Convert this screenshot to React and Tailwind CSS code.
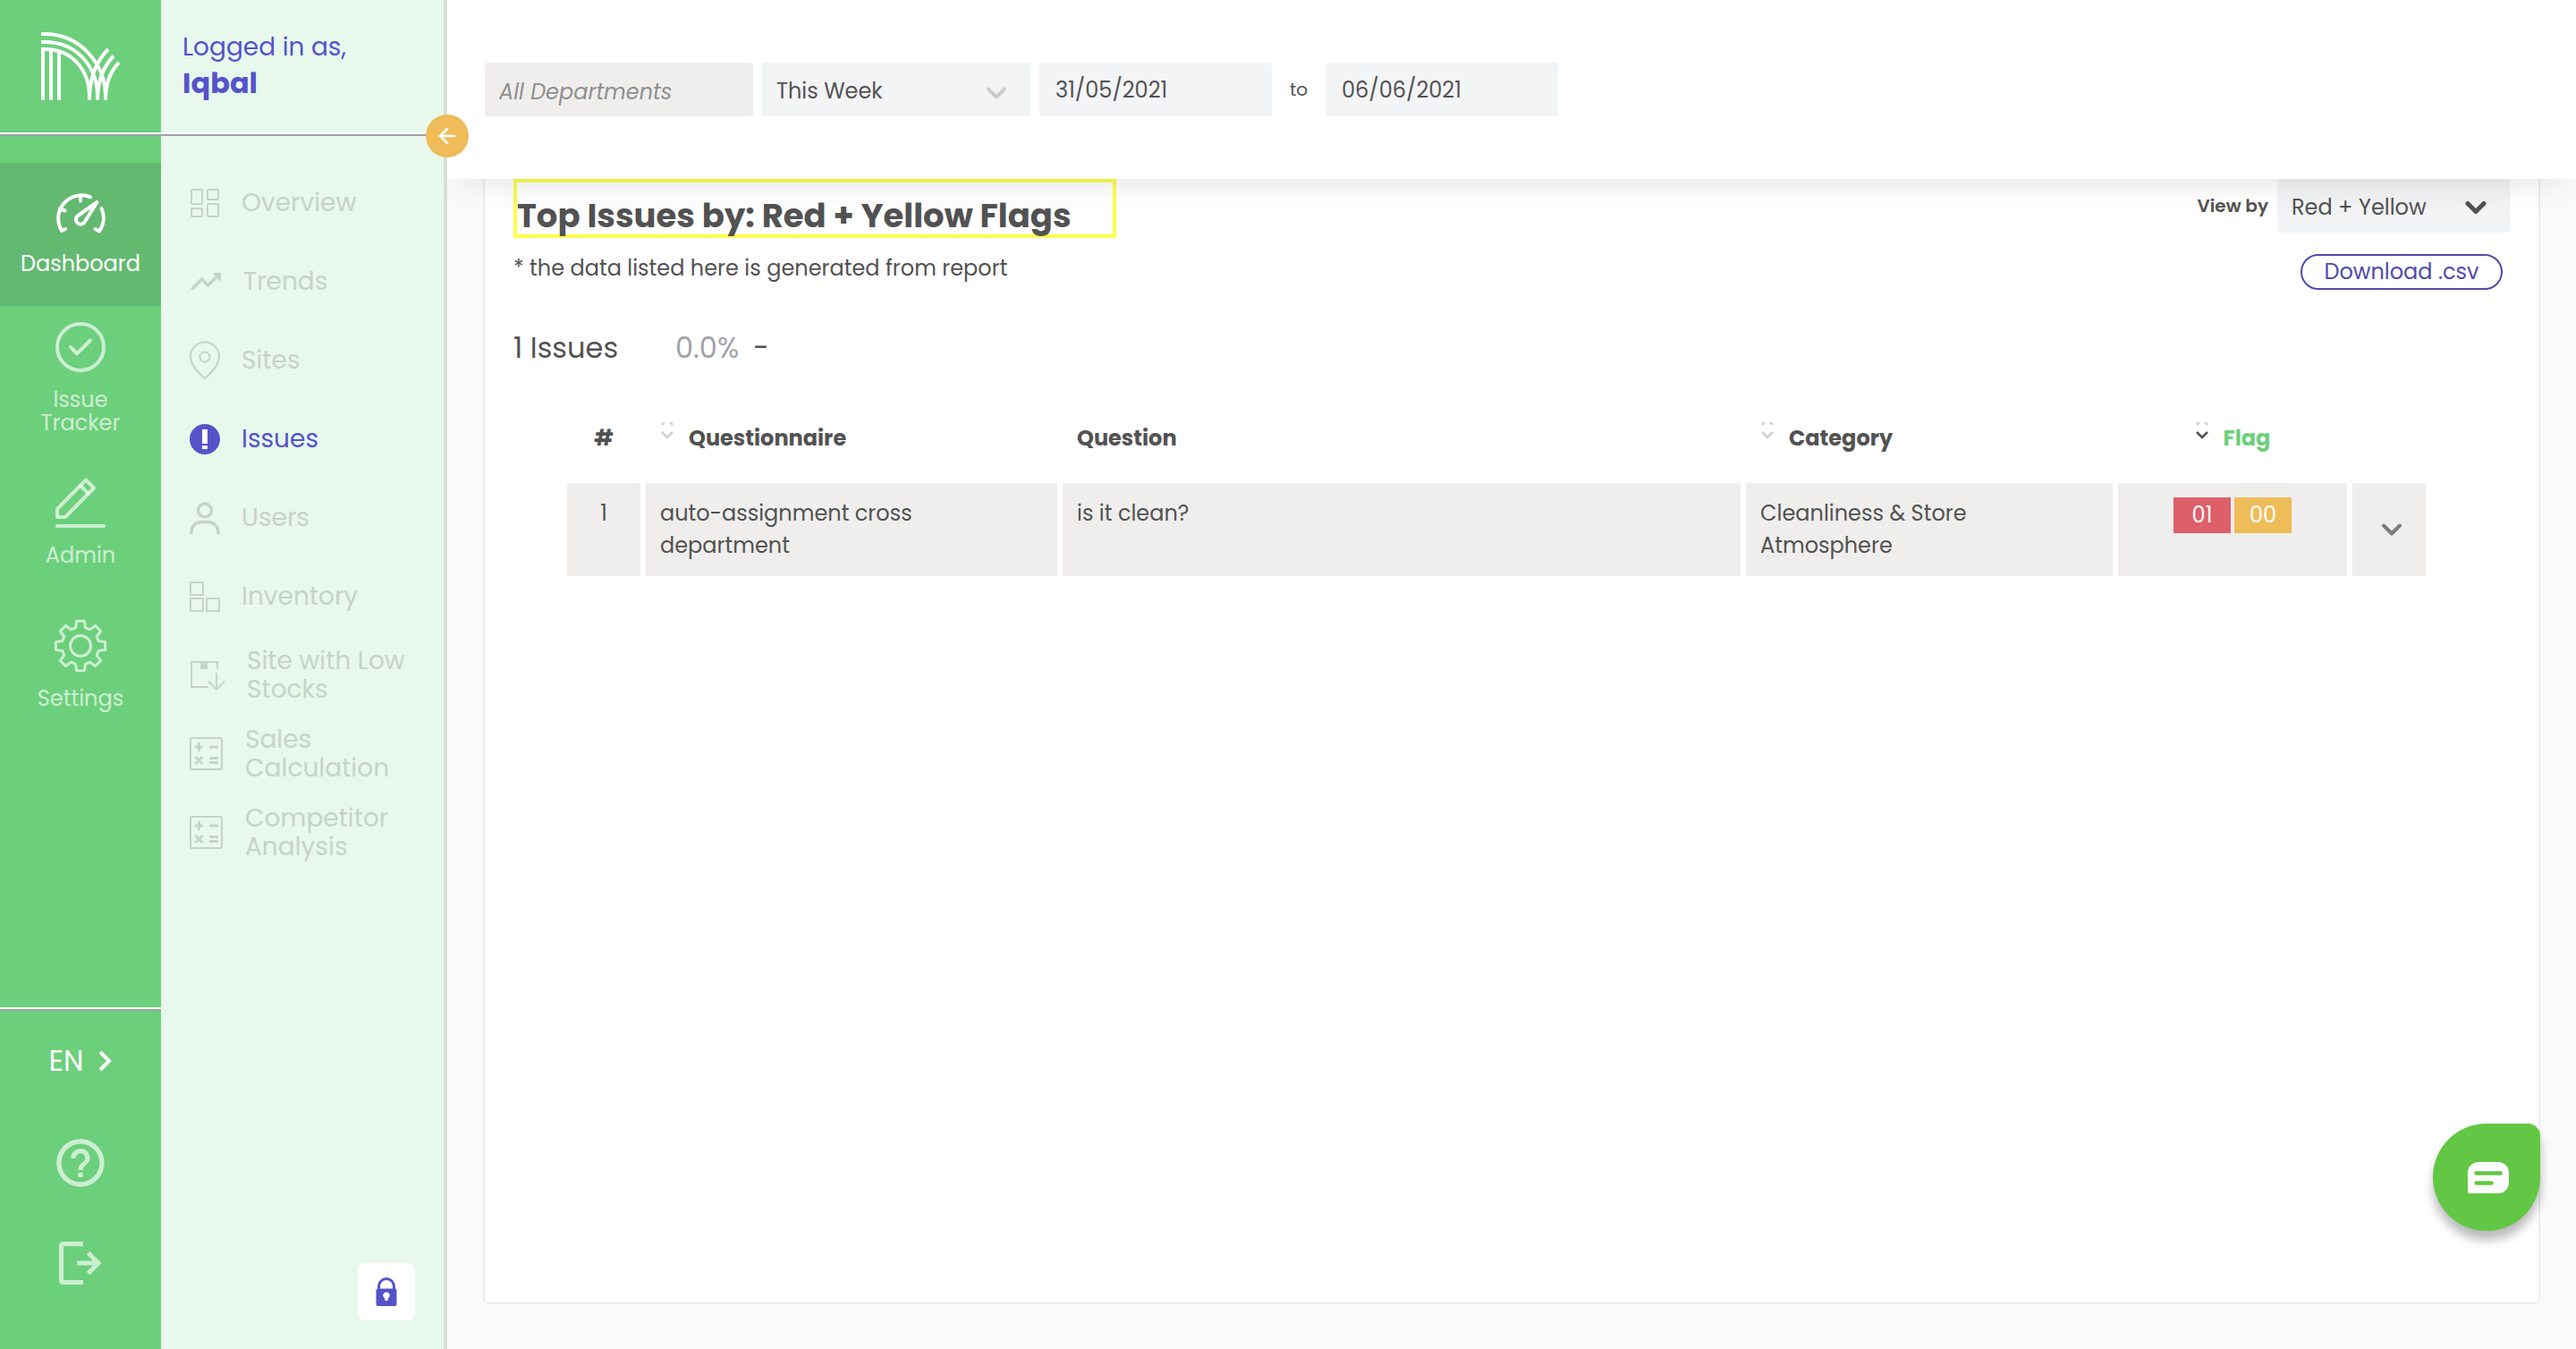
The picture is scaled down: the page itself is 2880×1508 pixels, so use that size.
import React from "react";
import { MdHelpOutline } from "react-icons/md";

function Logo() {
  return (
    <svg viewBox="46 36 88 76" className="h-[76px] w-[88px] overflow-visible" fill="none" stroke="#fff" strokeWidth="4">
      <path d="M48 112V55M57 112V57M66 112V58" />
      <path d="M46 55H50C82 55 100 80 100 108V112" />
      <path d="M46 47H50C87 47 109 76 109 108V112" />
      <path d="M46 38H50C90 38 118 72 118 108V112" />
      <path d="M100 112C100 88 107 69 121 55" />
      <path d="M109 112C109 91 115 75 127 62.500" />
      <path d="M118 112C118 93 123 80 133 70" />
    </svg>
  );
}

function GaugeIcon() {
  return (
    <svg viewBox="60 216 60 48" className="h-12 w-[60px]" fill="none" stroke="currentColor" strokeWidth="4" strokeLinecap="round" strokeLinejoin="round">
      <path d="M73 258L69 260A26 26 0 0 1 101 222.300" />
      <path d="M90 221V226.500M67 235.500L72.500 237.500" />
      <path d="M113.500 235A26 26 0 0 1 111 260.500L106.500 258" />
      <path d="M108.500 228L95 249.500A5.300 5.300 0 1 1 86.500 243.500Z" />
    </svg>
  );
}

function CheckCircleIcon() {
  return (
    <svg viewBox="60 358 60 60" className="size-[60px]" fill="none" stroke="currentColor" strokeWidth="4" strokeLinecap="round" strokeLinejoin="round">
      <circle cx="90" cy="388" r="26" />
      <path d="M79 388L86 395.300L101 380.500" />
    </svg>
  );
}

function PencilIcon() {
  return (
    <svg viewBox="60 532 60 60" className="size-[60px]" fill="none" stroke="currentColor" strokeWidth="4" strokeLinecap="round" strokeLinejoin="round">
      <path d="M64 578V569L96 536.500L105 545.500L73 578Z" />
      <path d="M90 543L98.500 551.500" />
      <path d="M64 588H116" />
    </svg>
  );
}

const gearPoints = Array.from({ length: 8 }, (_, i) =>
  [
    [21, -15],
    [28, -9],
    [28, 9],
    [21, 15],
  ]
    .map(([r, offset]) => {
      const a = ((i * 45 + offset) * Math.PI) / 180;
      return `${(30 + r * Math.sin(a)).toFixed(2)},${(30 - r * Math.cos(a)).toFixed(2)}`;
    })
    .join(" ")
).join(" ");

function GearIcon() {
  return (
    <svg viewBox="0 0 60 60" className="size-[60px]" fill="none" stroke="currentColor" strokeWidth="3" strokeLinejoin="round">
      <polygon points={gearPoints} />
      <circle cx="30" cy="30" r="11.500" />
    </svg>
  );
}

function LogoutIcon() {
  return (
    <svg viewBox="66 1388 48 48" className="size-12" fill="none" stroke="currentColor" strokeWidth="5">
      <path d="M93 1390.500H71Q68.500 1390.500 68.500 1393V1431Q68.500 1433.500 71 1433.500H93" />
      <path d="M86 1412H110M98.500 1400.500L110 1412L98.500 1423.500" />
    </svg>
  );
}

function OverviewIcon() {
  return (
    <svg viewBox="212 209 34 36" className="h-9 w-[34px]" fill="none" stroke="currentColor" strokeWidth="2">
      <rect x="214" y="212" width="12" height="16" rx="1" />
      <rect x="232" y="212" width="12" height="11" rx="1" />
      <rect x="214" y="233" width="12" height="9" rx="1" />
      <rect x="232" y="228" width="12" height="14" rx="1" />
    </svg>
  );
}

function TrendsIcon() {
  return (
    <svg viewBox="212 296 36 36" className="size-9" fill="none" stroke="currentColor" strokeWidth="3.500">
      <path d="M214.500 322.500L225.500 311L232.500 318L243.500 307" />
      <path d="M237.500 304H247V314Z" fill="currentColor" stroke="none" />
    </svg>
  );
}

function PinIcon() {
  return (
    <svg viewBox="212 380 34 44" className="h-11 w-[34px]" fill="none" stroke="currentColor" strokeWidth="2">
      <path d="M229 422C225 418 213 409 213 397.500A16 16 0 0 1 245 397.500C245 409 233 418 229 422Z" />
      <circle cx="229" cy="398" r="5.500" />
    </svg>
  );
}

function IssuesIcon() {
  return (
    <svg viewBox="212 474 34 34" className="size-[34px]">
      <circle cx="229" cy="491" r="17" fill="currentColor" />
      <rect x="226" y="480" width="6" height="16" fill="#fff" />
      <rect x="226" y="498" width="6" height="4" fill="#fff" />
    </svg>
  );
}

function UsersIcon() {
  return (
    <svg viewBox="212 560 34 36" className="h-9 w-[34px]" fill="none" stroke="currentColor" strokeWidth="3.500">
      <circle cx="229" cy="569.500" r="7.500" />
      <path d="M213.800 596C213.800 587 218.500 582.500 226 582.500H232C239.500 582.500 244.200 587 244.200 596" />
    </svg>
  );
}

function InventoryIcon() {
  return (
    <svg viewBox="212 650 34 34" className="size-[34px]" fill="none" stroke="currentColor" strokeWidth="2">
      <rect x="213" y="651" width="14" height="14" />
      <rect x="213" y="669" width="14" height="14" />
      <rect x="231" y="669" width="14" height="14" />
    </svg>
  );
}

function LowStockIcon() {
  return (
    <svg viewBox="212 738 40 34" className="h-[34px] w-10" fill="none" stroke="currentColor" strokeWidth="2">
      <path d="M233 768H214V740H243V748" />
      <rect x="224" y="740" width="8" height="8" fill="currentColor" stroke="none" />
      <path d="M242 752V770M233 761.500L242 770.500L251 761.500" />
    </svg>
  );
}

function CalcIcon() {
  return (
    <svg viewBox="212 824 38 38" className="size-[38px]" fill="none" stroke="currentColor" strokeWidth="3">
      <rect x="213" y="825" width="35" height="35" rx="1" strokeWidth="2" />
      <path d="M218 835H227M222.500 830V840M234 835H244M234 847.500H244M234 852.500H244" />
      <path d="M218.500 846L226.500 854M226.500 846L218.500 854" />
    </svg>
  );
}

function Chevron({ className, strokeWidth = 5 }) {
  return (
    <svg viewBox="0 0 24 16" className={className} fill="none" stroke="currentColor" strokeWidth={strokeWidth} strokeLinecap="round" strokeLinejoin="round" aria-hidden="true">
      <path d="M3 3.500L12 12.500L21 3.500" />
    </svg>
  );
}

function SortIcon({ active }) {
  return (
    <svg viewBox="0 0 16 20" className="h-5 w-4" fill="none" strokeWidth="2.500" aria-hidden="true">
      <path d="M2 3L8 -4L14 3" stroke="#cfcfcf" />
      <path d="M2 11L8 17L14 11" stroke={active ? "#525252" : "#cfcfcf"} />
    </svg>
  );
}

const railItems = [
  { label: "Dashboard", Icon: GaugeIcon, box: "h-40 gap-5 pt-8 bg-[#64b971] text-white" },
  { label: "Issue Tracker", Icon: CheckCircleIcon, box: "h-[170px] gap-4 pt-4 text-white/65" },
  { label: "Admin", Icon: PencilIcon, box: "h-40 gap-4 pt-5 text-white/65" },
  { label: "Settings", Icon: GearIcon, box: "h-40 gap-4 pt-5 text-white/65" },
];

const menuItems = [
  { label: "Overview", Icon: OverviewIcon },
  { label: "Trends", Icon: TrendsIcon },
  { label: "Sites", Icon: PinIcon },
  { label: "Issues", Icon: IssuesIcon, active: true },
  { label: "Users", Icon: UsersIcon },
  { label: "Inventory", Icon: InventoryIcon },
  { label: "Site with Low Stocks", Icon: LowStockIcon },
  { label: "Sales Calculation", Icon: CalcIcon },
  { label: "Competitor Analysis", Icon: CalcIcon },
];

function Rail() {
  return (
    <nav aria-label="Main" className="flex w-[180px] shrink-0 flex-col bg-[#6ccf7b]">
      <div className="flex h-[152px] items-start justify-center border-b-2 border-[#9ea3a8]">
        <div className="flex h-[150px] w-full justify-center border-b-2 border-white pt-9">
          <Logo />
        </div>
      </div>
      <div className="flex flex-col pt-[30px]">
        {railItems.map(({ label, Icon, box }) => (
          <a key={label} href="#" className={`flex flex-col items-center text-center text-2xl leading-[26px] ${box}`}>
            <Icon />
            <span className="w-36">{label}</span>
          </a>
        ))}
      </div>
      <div className="mt-auto flex h-[382px] flex-col items-center border-t-2 border-white">
        <div className="h-0 w-full border-t-2 border-[#9ea3a8]" />
        <button type="button" className="mt-8 flex h-12 items-center gap-4 text-[32px] text-white">
          EN
          <svg viewBox="0 0 16 24" className="h-6 w-4" fill="none" stroke="currentColor" strokeWidth="4" aria-hidden="true">
            <path d="M3 2L13 12L3 22" />
          </svg>
        </button>
        <button type="button" aria-label="Help" className="mt-[58px] text-white/65">
          <MdHelpOutline className="size-16" />
        </button>
        <button type="button" aria-label="Log out" className="mt-14 text-white/65">
          <LogoutIcon />
        </button>
      </div>
    </nav>
  );
}

function SideMenu() {
  return (
    <aside className="relative z-20 flex w-80 shrink-0 flex-col border-r-4 border-[#d2e2d6] bg-[#e8f8ec]">
      <div className="flex h-[152px] flex-col border-b-2 border-[#9ea3a8]">
        <div className="h-[150px] border-b-2 border-white pt-[33px] pl-6 text-[#5553ca]">
          <p className="text-[28px] leading-10">Logged in as,</p>
          <p className="text-[32px] leading-10 font-bold">Iqbal</p>
        </div>
      </div>
      <button type="button" aria-label="Collapse menu" className="absolute top-32 -right-7 flex size-12 items-center justify-center rounded-full bg-[#eebc59] text-white">
        <svg viewBox="0 0 20 20" className="size-5" fill="none" stroke="currentColor" strokeWidth="2.500">
          <path d="M19 10H2M10.500 1.500L2 10L10.500 18.500" />
        </svg>
      </button>
      <ul className="pt-[31px] pl-8 text-[28px] leading-8">
        {menuItems.map(({ label, Icon, active }) => (
          <li key={label}>
            <a href="#" className={`flex h-[88px] items-center gap-6 pr-8 ${active ? "text-[#5553ca]" : "text-[#c7d2ca]"}`}>
              <span className="shrink-0"><Icon /></span>
              <span>{label}</span>
            </a>
          </li>
        ))}
      </ul>
      <button type="button" aria-label="Lock menu" className="mt-auto mr-8 mb-8 flex size-16 items-center justify-center self-end rounded-lg bg-white text-[#5553ca]">
        <svg viewBox="0 0 24 32" className="h-8 w-6">
          <path d="M3.500 14V10A8.500 8.500 0 0 1 20.500 10V14" fill="none" stroke="currentColor" strokeWidth="3" />
          <rect x="0.500" y="12.500" width="23" height="19.500" rx="2.500" fill="currentColor" />
          <path d="M12 16.500A3.500 3.500 0 0 1 14 23L13.500 26H10.500L10 23A3.500 3.500 0 0 1 12 16.500Z" fill="#fff" />
        </svg>
      </button>
    </aside>
  );
}

const field = "h-[60px] rounded bg-[#f3f4f6] text-[#525252]";

function Filters() {
  return (
    <header className="z-10 flex h-[200px] items-start bg-white pt-[70px] pl-[42px] text-2xl shadow-[0_20px_40px_-20px_rgba(0,0,0,0.14)]">
      <input aria-label="Departments" disabled placeholder="All Departments" className="h-[60px] w-[300px] rounded bg-[#efeeec] px-4 pt-1 italic placeholder:text-[#8f8f8f]" />
      <div className="relative ml-2.5">
        <select aria-label="Period" className={`${field} w-[300px] appearance-none px-4 pt-1`}>
          <option>This Week</option>
        </select>
        <Chevron className="pointer-events-none absolute top-[26px] right-[26px] h-4 w-6 text-[#cccccc]" strokeWidth={4} />
      </div>
      <input aria-label="From date" defaultValue="31/05/2021" className={`${field} ml-2.5 w-[260px] px-[18px]`} />
      <span className="w-[60px] text-center text-xl leading-[60px] text-[#525252]">to</span>
      <input aria-label="To date" defaultValue="06/06/2021" className={`${field} w-[260px] px-[18px]`} />
    </header>
  );
}

function IssuesTable() {
  const cell = "bg-[#efeeec] px-4 pt-4 pb-4 align-top";
  return (
    <table className="w-full table-fixed border-separate border-spacing-x-1.5 border-spacing-y-0 text-2xl leading-9 text-[#525252]">
      <colgroup>
        <col className="w-[82px]" />
        <col className="w-[460px]" />
        <col />
        <col className="w-[410px]" />
        <col className="w-[256px]" />
        <col className="w-[82px]" />
      </colgroup>
      <thead>
        <tr className="h-[68px] text-left align-top">
          <th className="text-center">#</th>
          <th className="px-4">
            <button type="button" className="flex items-start gap-4"><SortIcon />Questionnaire</button>
          </th>
          <th className="px-4">Question</th>
          <th className="px-4">
            <button type="button" className="flex items-start gap-4"><SortIcon />Category</button>
          </th>
          <th>
            <button type="button" className="mx-auto flex items-start gap-4 text-[#6ccf7b]"><SortIcon active />Flag</button>
          </th>
          <th aria-label="Expand" />
        </tr>
      </thead>
      <tbody>
        <tr className="h-[104px]">
          <td className={`${cell} text-center`}>1</td>
          <td className={`${cell} pr-24`}>auto-assignment cross department</td>
          <td className={cell}>is it clean?</td>
          <td className={`${cell} pr-24`}>Cleanliness &amp; Store Atmosphere</td>
          <td className={cell}>
            <div className="flex justify-center gap-1 text-center leading-10 text-white">
              <span className="w-16 bg-[#dc5f69]">01</span>
              <span className="w-16 bg-[#eebc59]">00</span>
            </div>
          </td>
          <td className="bg-[#efeeec] pl-1.5 align-middle">
            <button type="button" aria-label="Show details" className="mx-auto flex text-[#7a7a7a]">
              <Chevron className="h-4 w-6" strokeWidth={4} />
            </button>
          </td>
        </tr>
      </tbody>
    </table>
  );
}

export default function App() {
  return (
    <div className="flex min-h-screen bg-[#fafafa] font-['Poppins','Inter',sans-serif]">
      <Rail />
      <SideMenu />
      <div className="flex min-w-0 flex-1 flex-col">
        <Filters />
        <main className="mr-10 mb-[50px] ml-10 flex-1 rounded-b-md border-2 border-t-0 border-[#eeeeee] bg-white px-8 text-[#525252]">
          <div className="flex items-start justify-between">
            <div>
              <h1 className="h-[66px] w-[674px] border-4 border-[#fdfd4f] pt-2.5 text-[37px] leading-[54px] font-bold whitespace-nowrap">
                Top Issues by: Red + Yellow Flags
              </h1>
              <p className="mt-4 text-2xl leading-9">* the data listed here is generated from report</p>
            </div>
            <div className="flex flex-col items-end">
              <div className="flex items-center">
                <label htmlFor="view-by" className="pr-2.5 text-xl font-semibold">View by</label>
                <div className="relative">
                  <select id="view-by" className={`${field} w-[260px] appearance-none px-4 pt-1 text-2xl`}>
                    <option>Red + Yellow</option>
                  </select>
                  <Chevron className="pointer-events-none absolute top-6 right-[26px] h-4 w-6" />
                </div>
              </div>
              <button type="button" className="mt-6 mr-2 h-10 w-[226px] rounded-full border-2 border-[#4f4bb0] text-2xl leading-8 text-[#4f4bb0]">
                Download .csv
              </button>
            </div>
          </div>
          <div className="mt-11 flex text-[32px] leading-[42px]">
            <span className="w-[181px]">1 Issues</span>
            <span className="text-[#a0a3a8]">0.0%</span>
            <span className="pl-4">-</span>
          </div>
          <div className="mt-[62px] mr-[88px] ml-[54px]">
            <IssuesTable />
          </div>
        </main>
      </div>
      <button type="button" aria-label="Open chat" className="fixed right-10 bottom-[132px] z-30 flex size-[120px] items-center justify-center rounded-[60px] rounded-tr-[14px] bg-[#62c744] pl-1 shadow-[0_10px_12px_rgba(0,0,0,0.28)]">
        <svg viewBox="0 0 46 35" className="h-[35px] w-[46px]">
          <path d="M12 0H34A12 12 0 0 1 46 12V23A12 12 0 0 1 34 35H2A2 2 0 0 1 0 33V12A12 12 0 0 1 12 0Z" fill="#fff" />
          <path d="M9.500 12.500H36.500M9.500 23.500H26.500" stroke="#62c744" strokeWidth="4.500" strokeLinecap="round" />
        </svg>
      </button>
    </div>
  );
}
